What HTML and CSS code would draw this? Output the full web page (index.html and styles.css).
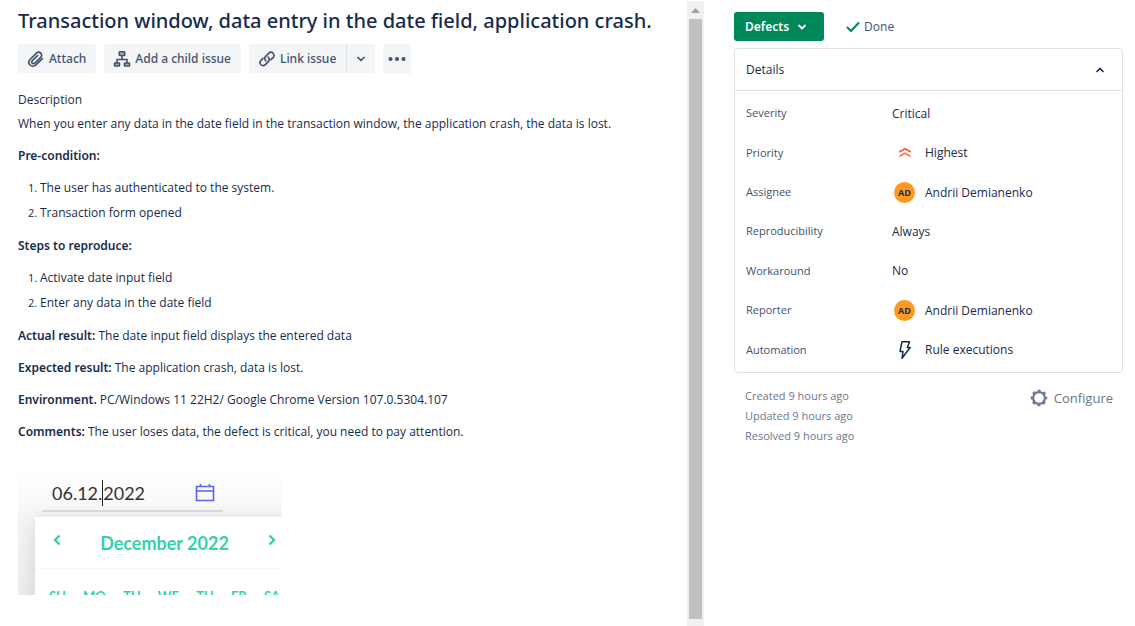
FILE: index.html
```html
<!DOCTYPE html>
<html lang="en">
<head>
<meta charset="utf-8">
<title>Transaction window, data entry in the date field, application crash.</title>
<link rel="stylesheet" href="styles.css">
</head>
<body>
<div class="page">
  <main class="issue">
    <h1 class="title">Transaction window, data entry in the date field, application crash.</h1>
    <div class="toolbar">
      <button class="btn" type="button">
        <svg class="icon" width="18" height="18" viewBox="0 0 24 24" fill="none" stroke="currentColor" stroke-width="2.200" stroke-linecap="round"><path d="M20.500 11.500l-8.600 8.400c-2.300 2.200-5.700 2.200-7.800.1-2.100-2.200-2-5.500.2-7.700l8.300-8.100c1.700-1.600 4.200-1.700 5.800-.1s1.500 4.100-.1 5.700l-7.900 7.700c-1 1-2.500 1-3.400.1s-.9-2.400.1-3.400l6.900-6.700"/></svg>
        Attach
      </button>
      <button class="btn" type="button">
        <svg class="icon" width="18" height="18" viewBox="0 0 18 18" fill="none" stroke="currentColor" stroke-width="1.600"><rect x="6.300" y="1.800" width="5.400" height="3.700" rx=".6" fill="#a5adba"/><path d="M9 5.500v4M4 13V9.500h10V13"/><rect x="1.500" y="13" width="5" height="3" rx=".6" fill="#a5adba"/><rect x="11.500" y="13" width="5" height="3" rx=".6" fill="#a5adba"/></svg>
        Add a child issue
      </button>
      <div class="split">
        <button class="btn btn-link" type="button">
          <svg class="icon" width="18" height="18" viewBox="0 0 24 24" fill="none" stroke="currentColor" stroke-width="2.200" stroke-linecap="round"><path d="M10.500 14.500c-2-1.700-2-4.400-.3-6.100l4-4c1.700-1.700 4.300-1.700 5.900-.1s1.600 4.200-.1 5.900l-2.700 2.700"/><path d="M13.500 9.500c2 1.700 2 4.400.3 6.100l-4 4c-1.700 1.700-4.300 1.700-5.900.1s-1.600-4.200.1-5.900l2.700-2.700"/></svg>
          Link issue
        </button>
        <button class="btn btn-drop" type="button" aria-label="More link options">
          <svg width="10" height="8" viewBox="0 0 10 8" fill="none" stroke="currentColor" stroke-width="1.700" stroke-linecap="round" stroke-linejoin="round"><path d="M2 2.500l3 3 3-3"/></svg>
        </button>
      </div>
      <button class="btn btn-more" type="button" aria-label="More actions">
        <svg width="18" height="6" viewBox="0 0 18 6" fill="currentColor"><circle cx="2.500" cy="3" r="2"/><circle cx="9" cy="3" r="2"/><circle cx="15.500" cy="3" r="2"/></svg>
      </button>
    </div>

    <h2 class="heading">Description</h2>
    <div class="description">
      <p>When you enter any data in the date field in the transaction window, the application crash, the data is lost.</p>
      <p><strong>Pre-condition:</strong></p>
      <ol>
        <li>The user has authenticated to the system.</li>
        <li>Transaction form opened</li>
      </ol>
      <p><strong>Steps to reproduce:</strong></p>
      <ol>
        <li>Activate date input field</li>
        <li>Enter any data in the date field</li>
      </ol>
      <p><strong>Actual result:</strong> The date input field displays the entered data</p>
      <p><strong>Expected result:</strong> The application crash, data is lost.</p>
      <p><strong>Environment.</strong> PC/Windows 11 22H2/ Google Chrome Version 107.0.5304.107</p>
      <p><strong>Comments:</strong> The user loses data, the defect is critical, you need to pay attention.</p>
    </div>

    <div class="shot">
      <div class="date-field">
        <span class="date">06.12.<span class="caret"></span>2022</span>
        <svg width="20" height="20" viewBox="0 0 20 20" fill="none" stroke="#5b63e6" stroke-width="1.600"><path d="M1.500 3.500h17v14h-17zM1.500 8h17M5.500 1v3M14.500 1v3"/></svg>
      </div>
      <div class="calendar">
        <div class="month">
          <svg width="10" height="12" viewBox="0 0 10 12" fill="none" stroke="currentColor" stroke-width="2.400"><path d="M7.500 1.500L3 6l4.500 4.500"/></svg>
          <span>December 2022</span>
          <svg width="10" height="12" viewBox="0 0 10 12" fill="none" stroke="currentColor" stroke-width="2.400"><path d="M2.500 1.500L7 6l-4.500 4.500"/></svg>
        </div>
        <div class="days"><span>SU</span><span>MO</span><span>TU</span><span>WE</span><span>TU</span><span>FR</span><span>SA</span></div>
      </div>
    </div>
  </main>

  <div class="scrollbar">
    <svg width="9" height="5" viewBox="0 0 9 5" fill="#a3a3a3"><path d="M0 5l4.500-5L9 5z"/></svg>
    <div class="thumb"></div>
  </div>

  <aside class="side">
    <div class="status">
      <button class="status-btn" type="button">Defects
        <svg width="10" height="8" viewBox="0 0 10 8" fill="none" stroke="currentColor" stroke-width="1.800" stroke-linecap="round" stroke-linejoin="round"><path d="M2 2.500l3 3 3-3"/></svg>
      </button>
      <span class="done">
        <svg width="14" height="12" viewBox="0 0 14 12" fill="none" stroke="#00875a" stroke-width="2" stroke-linecap="round" stroke-linejoin="round"><path d="M1.500 6.500l3.500 3.500 7.500-8"/></svg>
        Done
      </span>
    </div>
    <section class="card">
      <button class="card-head" type="button">Details
        <svg width="10" height="8" viewBox="0 0 10 8" fill="none" stroke="currentColor" stroke-width="1.700" stroke-linecap="round" stroke-linejoin="round"><path d="M2 5.500l3-3 3 3"/></svg>
      </button>
      <dl class="fields">
        <dt>Severity</dt><dd>Critical</dd>
        <dt>Priority</dt><dd><span class="lead"><svg width="14" height="12" viewBox="0 0 14 12" fill="none" stroke-width="1.800" stroke-linecap="round" stroke-linejoin="round"><path stroke="#ff5630" d="M2 4.500l5-2.700 5 2.700"/><path stroke="#ff7452" d="M2 9l5-2.700L12 9"/></svg></span>Highest</dd>
        <dt>Assignee</dt><dd><span class="lead"><span class="avatar">AD</span></span>Andrii Demianenko</dd>
        <dt>Reproducibility</dt><dd>Always</dd>
        <dt>Workaround</dt><dd>No</dd>
        <dt>Reporter</dt><dd><span class="lead"><span class="avatar">AD</span></span>Andrii Demianenko</dd>
        <dt>Automation</dt><dd><span class="lead"><svg width="14" height="20" viewBox="0 0 14 20" fill="none" stroke="#172b4d" stroke-width="1.500" stroke-linejoin="round"><path d="M4 1.800h7.500L9.300 7.500h2.900L4 18.200l1-6.700H2z"/></svg></span>Rule executions</dd>
      </dl>
    </section>
    <footer class="meta">
      <div class="times">
        <div>Created 9 hours ago</div>
        <div>Updated 9 hours ago</div>
        <div>Resolved 9 hours ago</div>
      </div>
      <button class="configure" type="button">
        <svg width="18" height="18" viewBox="0 0 18 18" fill="none" stroke="currentColor"><circle cx="9" cy="9" r="5.900" stroke-width="2.200"/><circle cx="9" cy="9" r="7.500" stroke-width="1.600" stroke-dasharray="2.945 2.945" stroke-dashoffset="1.472"/></svg>
        Configure
      </button>
    </footer>
  </aside>
</div>
</body>
</html>
```
FILE: styles.css
```css
* { box-sizing: border-box; }
body {
  margin: 0;
  background: #fff;
  color: #172b4d;
  font-family: "Open Sans", "Noto Sans", sans-serif;
  font-size: 12px;
  line-height: 20px;
}
button { font: inherit; color: inherit; border: 0; background: none; padding: 0; cursor: pointer; }
svg { display: block; flex: none; }
h1, h2, p, ol, dl, dd { margin: 0; }
.page {
  display: grid; grid-template-columns: minmax(0, 687fr) 17px minmax(0, 431fr);
  min-height: 100vh;
}

.issue { padding: 7px 18px 0; }
.title { font-family: "Noto Sans", sans-serif; font-size: 20px; line-height: 28px; font-weight: 500; white-space: nowrap; }
.toolbar {
  display: flex; align-items: flex-start; gap: 8px; margin-top: 9px;
  color: #42526e; font-family: "Noto Sans", sans-serif;
}
.btn {
  display: flex; align-items: center; justify-content: center; gap: 4px;
  height: 29px; padding: 0 10px 0 9px;
  background: #f4f5f7; border-radius: 3px; font-weight: 500;
}
.split { display: flex; gap: 1px; background: #dfe1e6; border-radius: 3px; }
.btn-link { border-radius: 3px 0 0 3px; }
.btn-drop { width: 28px; padding: 0; border-radius: 0 3px 3px 0; }
.btn-more { width: 28px; height: 30px; padding: 0; }

.heading { margin-top: 16px; font-size: 12px; line-height: 20px; font-weight: 500; }
.description { margin-top: 4px; }
.description p + p { margin-top: 12px; }
.description ol + p { margin-top: 13px; }
.description ol { display: flex; flex-direction: column; gap: 5px; margin-top: 12px; padding-left: 22px; }
.description li::marker { font-size: 11px; }
.description strong { font-family: "Noto Sans", sans-serif; font-weight: 600; }

.shot {
  width: 264px; height: 123px; margin-top: 30px; overflow: hidden;
  border-radius: 3px;
  background: linear-gradient(#fff, #f4f4f4 40%, #ededed);
}
.date-field {
  display: flex; align-items: center; justify-content: space-between;
  width: 181px; height: 40px; margin-left: 24px; padding: 4px 8px 0 10px;
  border-bottom: 2px solid #dcdcdc;
  color: #333; font-family: Lato, sans-serif; font-size: 18px;
}
.date { display: flex; align-items: center; }
.caret { width: 1px; height: 26px; background: #222; }
.calendar {
  margin: 5px 0 0 17px; background: #fff; color: #36cfae;
  font-family: Lato, sans-serif; font-weight: 700;
  box-shadow: 0 4px 18px rgb(0 0 0 / 12%);
}
.month {
  display: flex; justify-content: space-between; height: 52px; padding: 13px 5px 0 17px;
  border-bottom: 1px solid #f7f7f7; font-size: 18px; line-height: 26px;
}
.month svg { margin-top: 4px; }
.days { display: flex; justify-content: space-between; padding: 17px 2px 0 14px; font-size: 13px; }

.scrollbar {
  display: flex; flex-direction: column; align-items: center; gap: 6px;
  margin-top: 1px; padding: 7px 2px; background: #f1f1f1;
}
.thumb { flex: 1; align-self: stretch; background: #c1c1c1; }

.side { padding: 12px 12px 0 30px; }
.status { display: flex; align-items: center; gap: 22px; }
.status-btn {
  display: flex; align-items: center; gap: 8px; height: 29px; padding: 0 17px 0 11px;
  border-radius: 3px; background: #00875a; color: #fff;
  font-family: "Noto Sans", sans-serif; font-weight: 600;
}
.done { display: flex; align-items: center; gap: 4px; color: #42526e; }
.card { margin-top: 7px; border: 1px solid #dfe1e6; border-radius: 4px; }
.card-head {
  display: flex; align-items: center; justify-content: space-between;
  width: 100%; height: 42px; padding: 0 17px 0 11px;
  border-bottom: 1px solid #dfe1e6; font-weight: 500;
}
.fields {
  display: grid; grid-template-columns: 146px 1fr; grid-auto-rows: 1fr; align-items: center;
  min-height: 281px; padding: 3px 11px 2px;
}
.fields dt { color: #42526e; font-size: 11px; line-height: 18px; padding-bottom: 1px; }
.fields dd { display: flex; align-items: center; gap: 8px; }
.lead { display: flex; justify-content: center; width: 25px; }
.avatar {
  width: 21px; height: 21px; border-radius: 50%; background: #ff991f;
  font-size: 9px; line-height: 21px; font-weight: 700; text-align: center;
}
.meta {
  display: flex; justify-content: space-between; align-items: flex-start;
  padding: 13px 10px 0 11px; color: #6b778c; font-size: 11px;
}
.configure { display: flex; align-items: center; gap: 6px; margin-top: 2px; font-size: 13px; font-weight: 400; }
```
